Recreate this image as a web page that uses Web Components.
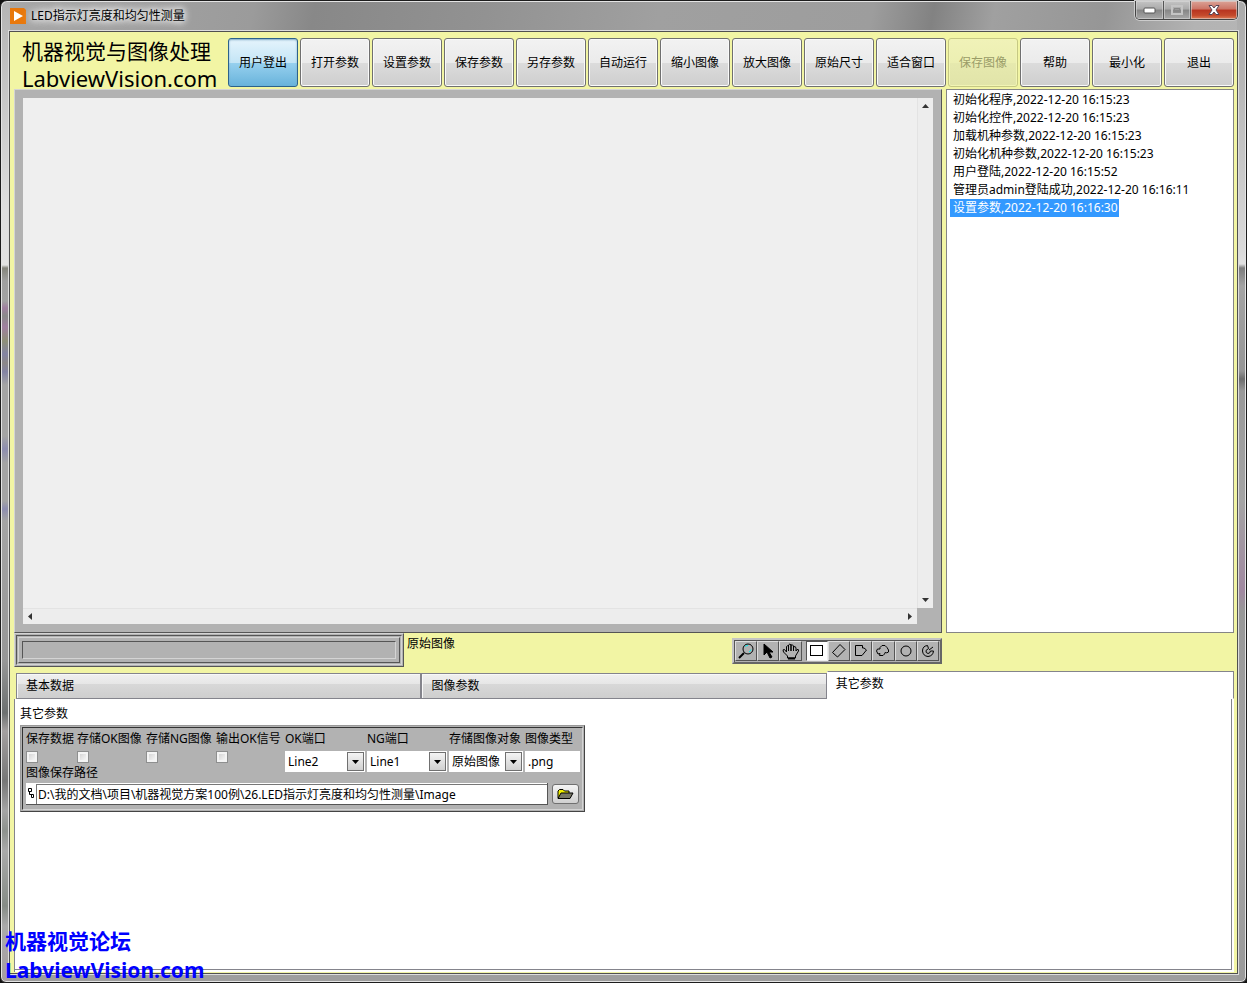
<!DOCTYPE html>
<html lang="zh-CN">
<head>
<meta charset="utf-8">
<title>LED指示灯亮度和均匀性测量</title>
<style>
html,body{margin:0;height:100%}
body{background:#111;font:12px/18px "Noto Sans","Noto Sans CJK SC",sans-serif;color:#000}
</style>
</head>
<body>
<app-window caption="LED指示灯亮度和均匀性测量">
  <main-toolbar slot="toolbar">
    <tool-button active>用户登出</tool-button>
    <tool-button>打开参数</tool-button>
    <tool-button>设置参数</tool-button>
    <tool-button>保存参数</tool-button>
    <tool-button>另存参数</tool-button>
    <tool-button>自动运行</tool-button>
    <tool-button>缩小图像</tool-button>
    <tool-button>放大图像</tool-button>
    <tool-button>原始尺寸</tool-button>
    <tool-button>适合窗口</tool-button>
    <tool-button disabled>保存图像</tool-button>
    <tool-button>帮助</tool-button>
    <tool-button>最小化</tool-button>
    <tool-button>退出</tool-button>
  </main-toolbar>
  <image-viewer slot="viewer"></image-viewer>
  <event-log slot="log">
    <log-entry>初始化程序,2022-12-20 16:15:23</log-entry>
    <log-entry>初始化控件,2022-12-20 16:15:23</log-entry>
    <log-entry>加载机种参数,2022-12-20 16:15:23</log-entry>
    <log-entry>初始化机种参数,2022-12-20 16:15:23</log-entry>
    <log-entry>用户登陆,2022-12-20 16:15:52</log-entry>
    <log-entry>管理员admin登陆成功,2022-12-20 16:16:11</log-entry>
    <log-entry selected>设置参数,2022-12-20 16:16:30</log-entry>
  </event-log>
  <status-strip slot="status"></status-strip>
  <param-tabs slot="tabs"><other-params></other-params></param-tabs>
</app-window>
<script>
function define(name, html, setup) {
  const template = document.createElement('template');
  template.innerHTML = '<style>*{box-sizing:border-box}:host{display:block;box-sizing:border-box}button,input,select{font:inherit;color:inherit;margin:0;padding:0;border-radius:0}svg{display:block}</style>' + html;
  customElements.define(name, class extends HTMLElement {
    constructor() {
      super();
      this.attachShadow({ mode: 'open' }).append(template.content.cloneNode(true));
    }
    connectedCallback() { if (setup) setup(this, this.shadowRoot); }
  });
}

define('app-window', `
<style>
:host{position:relative;display:flex;flex-direction:column;min-height:100vh;padding:0 8px 8px 8px;
  border:1px solid #1c1c1c;border-radius:7px 7px 6px 6px;
  box-shadow:inset 0 0 0 1px #e4e4e4;
  background:
   linear-gradient(#b4b4b4,#c4c4c4 80px,#dedede 210px,#e2e2e2 264px,#85857c 267px,#a0a0a0 280px,#a2a2a2 300px,#a080a0 307px,#8a8a8a 315px,#a080a0 326px,#8f9078 340px,#8484a4 353px,#8c8888 362px,#8484a4 371px,#a4a4a4 384px,#a4a4a4 435px,#8e8eb0 448px,#a4a4a4 462px,#a4a4a4 500px,#8e8eb0 508px,#a4a4a4 520px,#979797 660px,#6d7070 712px,#a4a0a0 730px,#777 780px,#a5a5a5 810px,#8e928e 830px,#aaa 850px,#868c86 905px,#aaa 925px,#a59da1) 0 0/9px 100% no-repeat,
   linear-gradient(#aaa,#b8b8b8 90px,#dadada 250px,#e0e0e0 263px,#7c7c7c 267px,#a4a4a4 285px,#969696 370px,#6d6d6d 378px,#999 390px,#a4a4a4 500px,#a088a0 590px,#989898 610px,#a5a5a5 790px,#9a9a9a) 100% 0/9px 100% no-repeat,
   linear-gradient(100deg,#a8a8a8 0,#9b9b9b 250px,#888 310px,#929292 480px,#a0a0a0 650px,#9d9d9d 860px,#828282 920px,#a0a0a0 980px,#969696 1090px,#b3b3b3 1180px,#b5b5b5) 0 0/100% 31px no-repeat,
   #9e9e9e}
header{display:flex;height:30px;align-items:flex-start}
.icon{margin:7px 5px 0 1px}
.caption{flex:1;margin-top:6px;text-shadow:0 0 6px #fff,0 0 8px #fff,0 0 10px #fff}
nav{display:flex;border:1px solid #444;border-top:0;border-radius:0 0 5px 5px;overflow:hidden;box-shadow:0 0 0 1px #ccc}
nav button{display:grid;place-items:center;height:18px;border:0;border-right:1px solid #555;box-shadow:inset 0 0 0 1px #ddd8;background:linear-gradient(#c4c4c4,#aaa 45%,#858585 50%,#a8a8a8)}
.min{width:28px}.max{width:27px}
nav button.close{width:46px;border:0;background:linear-gradient(#dba397,#cc7465 45%,#b83420 50%,#c44a2c 80%,#df7d58)}
.client{flex:1;display:flex;flex-direction:column;border:1px solid #505050;outline:1px solid #ddd;background:#f2f5a4;padding:6px 3px 1px 4px}
.work{display:grid;grid-template-columns:minmax(0,1fr) 288px;gap:4px;height:544px;margin-top:2px}
slot[name=tabs]::slotted(*){flex:1}
.mark{position:absolute;left:4px;bottom:-3px;color:#00f;font:bold 21px/29px "Noto Sans","Noto Sans CJK SC",sans-serif}
.mark span{display:block}
</style>
<header>
  <svg class="icon" width="16" height="16"><path d="M0 0H14L16 2V16H0Z" fill="#e8780c"/><path d="M4 3L13 8L4 13Z" fill="#fff"/></svg>
  <div class="caption"></div>
  <nav>
    <button class="min" aria-label="最小化窗口"><svg width="14" height="7"><rect x="1" y="1" width="11" height="5" rx="1" fill="#fff" stroke="#555"/></svg></button>
    <button class="max" aria-label="最大化窗口" disabled><svg width="12" height="10" fill="none"><rect x="1" y="1" width="10" height="8" stroke="#c4c4c4" stroke-width="2"/><rect x="3.500" y="3.500" width="5" height="3" stroke="#888"/></svg></button>
    <button class="close" aria-label="关闭窗口"><svg width="14" height="12"><path d="M2 1.500H5L7 4L9 1.500H12L9 6L12 10.500H9L7 8L5 10.500H2L5 6Z" fill="#fff" stroke="#545" stroke-width="1"/></svg></button>
  </nav>
</header>
<div class="client">
  <slot name="toolbar"></slot>
  <div class="work"><slot name="viewer"></slot><slot name="log"></slot></div>
  <slot name="status"></slot>
  <slot name="tabs"></slot>
</div>
<div class="mark"><span>机器视觉论坛</span><span>LabviewVision.com</span></div>`,
(host, root) => { root.querySelector('.caption').textContent = host.getAttribute('caption'); });

define('main-toolbar', `
<style>
:host{display:flex;height:49px}
.brand{width:214px;padding-left:8px;font-size:21px;line-height:27px;white-space:nowrap}
.brand span{display:block}
.brand .site{font-size:22px}
.buttons{flex:1;display:flex;gap:2px}
</style>
<div class="brand"><span>机器视觉与图像处理</span><span class="site">LabviewVision.com</span></div>
<div class="buttons"><slot></slot></div>`);

define('tool-button', `
<style>
:host{flex:1 1 0;min-width:0}
button{width:100%;height:49px;border:1px solid #707070;border-radius:3px;box-shadow:inset 0 0 0 1px #fafafa;
 background:linear-gradient(#f2f2f2,#ebebeb 50%,#dcdcdc 50%,#cecece);white-space:nowrap}
:host([active]) button{border-color:#2c628b;box-shadow:inset 0 1px 2px #7fa9c4;background:linear-gradient(#e5f4fc,#c4e5f6 50%,#98d1ef 50%,#68b3db)}
button:disabled{border-color:#c6c884;color:#9a9c68;box-shadow:inset 0 0 0 1px #f2f5b4;background:linear-gradient(#f0f2b8,#ecefb2 50%,#e6e9ae 50%,#e1e4a9)}
</style>
<button type="button"><slot></slot></button>`,
(host, root) => { root.querySelector('button').disabled = host.hasAttribute('disabled'); });

define('image-viewer', `
<style>
:host{display:grid;grid-template:minmax(0,1fr) 16px/minmax(0,1fr) 16px;padding:8px;border:1px solid;border-color:#d4d4d4 #555 #555 #d4d4d4;background:#b2b2b2}
.canvas{background:#efefef}
.bar{display:flex;justify-content:space-between;align-items:center;background:#ededed}
.v{flex-direction:column;border-left:1px solid #e3e3e3;padding:6px 0}
.h{border-top:1px solid #e3e3e3;padding:0 5px}
</style>
<div class="canvas"></div>
<div class="bar v"><svg width="7" height="4"><path d="M0 4L3.500 0L7 4Z" fill="#333"/></svg><svg width="7" height="4"><path d="M0 0L3.500 4L7 0Z" fill="#333"/></svg></div>
<div class="bar h"><svg width="4" height="7"><path d="M4 0L0 3.500L4 7Z" fill="#333"/></svg><svg width="4" height="7"><path d="M0 0L4 3.500L0 7Z" fill="#333"/></svg></div>`);

define('event-log', `
<style>:host{border:1px solid #858585;background:#fff;padding:1px 3px}</style>
<div role="listbox" aria-label="日志"><slot></slot></div>`);

define('log-entry', `
<style>
:host{width:max-content;height:18px;padding:0 1px 0 3px;white-space:nowrap}
:host([selected]){background:#39f;color:#fff}
</style><slot></slot>`,
(host) => { host.setAttribute('role', 'option'); });

define('status-strip', `
<style>
:host{display:flex;align-items:flex-start;height:38px}
.gauge{width:390px;height:34px;padding:1px;border:1px solid;border-color:#d4d4d4 #555 #555 #d4d4d4;background:#b2b2b2}
.ring{height:100%;padding:1px;border:1px solid;border-color:#555 #d4d4d4 #d4d4d4 #555}
.lift{height:100%;padding:3px;border:1px solid;border-color:#d4d4d4 #555 #555 #d4d4d4}
.well{height:100%;border:1px solid;border-color:#555 #d4d4d4 #d4d4d4 #555}
.label{flex:1;padding:2px 3px}
.tools{display:flex;width:210px;height:26px;margin:5px 292px 0 0;padding:1px;border:2px solid;border-color:#c4c4c4 #666 #666 #c4c4c4;background:#b2b2b2;box-shadow:inset 1px 1px #555}
.tools button{flex:1 1 0;display:grid;place-items:center;border:1px solid;border-color:#ddd #555 #555 #ddd;background:#b2b2b2}
.tools .gap{width:4px}
.tools button[aria-pressed]{border-color:#555 #eee #eee #555;background:#fff}
svg{fill:none;stroke:#000;stroke-width:1}
</style>
<div class="gauge" role="progressbar" aria-label="进度"><div class="ring"><div class="lift"><div class="well"></div></div></div></div>
<div class="label">原始图像</div>
<div class="tools">
 <button aria-label="缩放"><svg width="18" height="16"><circle cx="11" cy="6" r="5"/><path d="M8 3.500Q9 2.500 11 2.500M14 6.500Q14 8 12 9" stroke="#0ee" stroke-width="1"/><path d="M7 10L2 15" stroke-width="2"/></svg></button>
 <button aria-label="指针"><svg width="12" height="16"><path d="M2 1V12L5 9L8 15L10 14L7 9H11Z" fill="#000"/></svg></button>
 <button aria-label="平移"><svg width="18" height="17"><path d="M5.500 15V13L1.500 9Q0 6 2.500 6.500L4.500 9V3.500Q5.500 2 6.500 3.500V8V2Q8 0 9 2V8V2Q10.500 1 11.500 3V8V4Q13.500 2.500 14 5V8L15 6.500Q17 6 16.500 8L13.500 13V15Z"/><path d="M6 15.500H13" stroke-width="2"/></svg></button>
 <span class="gap"></span>
 <button aria-label="矩形" aria-pressed="true"><svg width="14" height="12"><rect x=".5" y=".5" width="12" height="10"/></svg></button>
 <button aria-label="旋转矩形"><svg width="14" height="14"><path d="M.5 8.500L8 .5L13 5.500L5.500 13Z"/></svg></button>
 <button aria-label="多边形"><svg width="14" height="12"><path d="M1.500 .5H8.500V3H10L12.500 5L8 10.500H1.500Z"/></svg></button>
 <button aria-label="自由区域"><svg width="14" height="12"><path d="M4 2.500L6 .5H9L11 2.500L12.500 5V7L10.500 8L9.500 7L8.500 9L7 10.500H3.500L4 8.500L2 9L.5 6L1.500 4L4 4Z"/></svg></button>
 <button aria-label="椭圆"><svg width="12" height="12"><circle cx="6" cy="6" r="5"/></svg></button>
 <button aria-label="圆环"><svg width="12" height="12"><path d="M5.500 .5Q.5 1 .5 6Q1 11 6 11.500Q11 11 11.500 6H8.500Q8 8.500 6 8.500Q3.500 8 4 5.500L6.500 3.500ZM7 5L11 2"/></svg></button>
</div>`);

define('param-tabs', `
<style>
:host{display:flex;flex-direction:column}
.tabs{display:flex;align-items:flex-end;height:28px;padding-left:2px}
button{height:26px;flex:405 1 0;text-align:left;padding:0 9px;border:1px solid #84848c;box-shadow:inset 1px 1px #f8f8f8;background:linear-gradient(#f0f0f0,#e6e6e6 42%,#d8d8d8 42%,#cecece)}
button[aria-selected=true]{flex-grow:409;height:28px;padding:0 8px 2px;border-bottom-color:#fff;border-left-color:#fff;background:#fff;box-shadow:none}
.page{flex:1;display:flex;background:#fff;border-left:1px solid #84848c;padding:0 2px 2px 0}
.body{flex:1;padding:6px 5px;border:1px solid #84848c;border-width:0 1px 1px 0}
</style>
<div class="tabs" role="tablist"><button role="tab">基本数据</button><button role="tab">图像参数</button><button role="tab" aria-selected="true">其它参数</button></div>
<div class="page" role="tabpanel"><div class="body"><slot></slot></div></div>`);

define('drop-down', `
<style>
:host{position:relative;height:21px;background:#fff}
select{appearance:none;display:block;width:100%;height:21px;padding:0 20px 0 3px;border:0;background:#fff}
.arrow{position:absolute;right:1px;top:1px;display:grid;place-items:center;width:17px;height:19px;border:1px solid #707070;background:linear-gradient(#f4f4f4,#d0d0d0);pointer-events:none}
</style>
<select><option></option></select>
<span class="arrow"><svg width="7" height="4"><path d="M0 0H7L3.500 4Z"/></svg></span>`,
(host, root) => {
  root.querySelector('option').textContent = host.getAttribute('value');
  root.querySelector('select').setAttribute('aria-label', host.getAttribute('label'));
});

define('other-params', `
<style>
.cluster{width:565px;margin-top:2px;padding:1px;border:1px solid;border-color:#999 #444 #444 #999;background:#b2b2b2}
.inner{padding:1px 2px 4px 3px;border:1px solid;border-color:#333 #d4d4d4 #d4d4d4 #333}
.row{display:grid;grid-template-columns:51px 69px 70px 69px 82px 82px 76px 55px;height:43px;white-space:nowrap}
.field{display:flex;flex-direction:column;align-items:flex-start}
.field label,.field .name{height:22px;line-height:20px}
input[type=checkbox]{appearance:none;width:12px;height:12px;border:1px solid #8e8f8f;background:linear-gradient(135deg,#ccc,#fff);box-shadow:inset 0 0 0 2px #f4f4f4}
drop-down{width:80px}
drop-down.narrow{width:74px}
.type{width:55px;height:21px;border:0;padding:0 3px;background:#fff}
.path-label{display:block;height:19px;margin-top:-8px}
.path{display:flex;align-items:center;gap:4px}
.box{display:flex;align-items:center;width:522px;height:22px;background:#fff;border-right:1px solid #555;border-bottom:1px solid #555}
.box svg{margin:0 2px;flex:none}
.box input{flex:1;min-width:0;height:20px;border:1px solid #777;border-width:1px 0 0 1px;padding:0 1px;background:#fff}
.open{display:grid;place-items:center;width:27px;height:20px;border:1px solid #707070;border-radius:3px;background:linear-gradient(#f4f4f4,#d0d0d0)}
</style>
<div>其它参数</div>
<div class="cluster"><div class="inner">
 <div class="row">
  <div class="field"><label for="a">保存数据</label><input type="checkbox" id="a"></div>
  <div class="field"><label for="b">存储OK图像</label><input type="checkbox" id="b"></div>
  <div class="field"><label for="c">存储NG图像</label><input type="checkbox" id="c"></div>
  <div class="field"><label for="d">输出OK信号</label><input type="checkbox" id="d"></div>
  <div class="field"><span class="name">OK端口</span><drop-down label="OK端口" value="Line2"></drop-down></div>
  <div class="field"><span class="name">NG端口</span><drop-down label="NG端口" value="Line1"></drop-down></div>
  <div class="field"><span class="name">存储图像对象</span><drop-down class="narrow" label="存储图像对象" value="原始图像"></drop-down></div>
  <div class="field"><label for="t">图像类型</label><input class="type" id="t" value=".png"></div>
 </div>
 <label class="path-label" for="p">图像保存路径</label>
 <div class="path">
  <div class="box"><svg width="6" height="11" fill="none" stroke="#000"><path d="M.5 .5H3.500V3.500H.5ZM1.500 4V6.500H4M3.500 6.500H5.500V9.500H3.500Z"/></svg><input id="p" value="D:\\我的文档\\项目\\机器视觉方案100例\\26.LED指示灯亮度和均匀性测量\\Image"></div>
  <button class="open" aria-label="浏览"><svg width="17" height="12" stroke="#000"><path d="M1 10V3L2.500 1.500H6L7.500 3H12V5" fill="#ee0"/><path d="M1 10.500L4 5H16L13 10.500Z" fill="#776"/></svg></button>
 </div>
</div></div>`);
</script>
</body>
</html>
